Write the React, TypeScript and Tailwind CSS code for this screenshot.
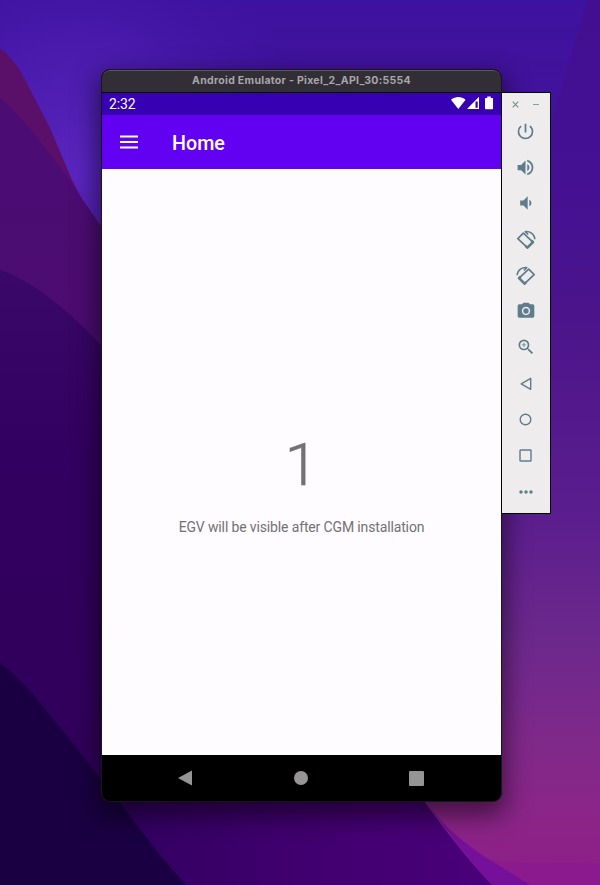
import type { ReactNode } from "react";
import {
  MdCameraAlt,
  MdMoreHoriz,
  MdPowerSettingsNew,
  MdVolumeDown,
  MdVolumeUp,
  MdZoomIn,
} from "react-icons/md";

function Wallpaper() {
  return (
    <svg
      className="absolute inset-0"
      width="600"
      height="885"
      viewBox="0 0 600 885"
      aria-hidden="true"
    >
      <defs>
        <linearGradient id="sky" x1="0" y1="0" x2="0" y2="1">
          <stop offset="0" stopColor="#3e12a0" />
          <stop offset="0.12" stopColor="#42129a" />
          <stop offset="0.35" stopColor="#4b148a" />
          <stop offset="0.57" stopColor="#5a1d8e" />
          <stop offset="0.72" stopColor="#6c288c" />
          <stop offset="0.84" stopColor="#80298a" />
          <stop offset="0.93" stopColor="#8c2488" />
          <stop offset="1" stopColor="#8c1e88" />
        </linearGradient>
        <radialGradient id="glow" gradientUnits="userSpaceOnUse" cx="75" cy="175" r="260">
          <stop offset="0" stopColor="#5b25bf" />
          <stop offset="0.5" stopColor="#4c1cb0" stopOpacity="0.8" />
          <stop offset="1" stopColor="#3e12a0" stopOpacity="0" />
        </radialGradient>
        <linearGradient id="corner" x1="0" y1="0" x2="0" y2="1">
          <stop offset="0" stopColor="#430f90" />
          <stop offset="1" stopColor="#430f90" stopOpacity="0" />
        </linearGradient>
        <linearGradient id="magenta" x1="0" y1="0" x2="0" y2="1">
          <stop offset="0" stopColor="#4b0c74" />
          <stop offset="1" stopColor="#4d0c68" />
        </linearGradient>
        <linearGradient id="violet" x1="0" y1="0" x2="0" y2="1">
          <stop offset="0" stopColor="#3a0868" />
          <stop offset="0.3" stopColor="#320060" />
          <stop offset="1" stopColor="#300058" />
        </linearGradient>
        <linearGradient id="floor" x1="0" y1="0" x2="1" y2="0">
          <stop offset="0" stopColor="#300060" />
          <stop offset="0.5" stopColor="#40006e" />
          <stop offset="1" stopColor="#4a007a" />
        </linearGradient>
      </defs>
      <rect width="600" height="885" fill="url(#sky)" />
      <rect width="400" height="450" fill="url(#glow)" />
      <path d="M587 0H600V330H500L558 100Z" fill="url(#corner)" />
      <path d="M0 48C8 54 14 62 20 70L50 128L72 180L82 199L101 226V400H0Z" fill="#5a1068" />
      <path d="M0 98C12 108 22 119 33 132C48 151 58 165 70 180L82 199L101 226L300 400V885H0Z" fill="url(#magenta)" />
      <path d="M0 270C34 281 70 312 100 344L300 540V885H0Z" fill="url(#violet)" />
      <path d="M100 740H378C410 779 448 839 492 885H100Z" fill="url(#floor)" />
      <path d="M488 860C525 866 560 861 600 864V885H520Z" fill="#8a1a8e" />
      <path d="M427 803C447 830 462 841 485 857L530 885H492C468 858 447 832 427 803Z" fill="#74109a" />
      <path d="M0 663C12 671 22 683 33 694L83 756C98 776 115 796 128 813C146 837 164 861 186 885H0Z" fill="#1a0042" />
    </svg>
  );
}

function RotateGlyph({ flipped = false }: { flipped?: boolean }) {
  return (
    <svg
      width="20"
      height="20"
      viewBox="0 0 20 20"
      fill="none"
      stroke="#5f7c8a"
      className={flipped ? "mt-px -scale-x-100" : "mt-px"}
    >
      <path d="M7.3 3.1 1.8 8.6 11.4 17.6 17 12.1Z" strokeWidth="1.7" strokeLinejoin="round" />
      <path d="M9.8 16.1 11.4 17.6 17 12.1 15.4 10.6" strokeWidth="2.6" strokeLinejoin="round" />
      <path d="M8.6 1.7C13.8.8 18.4 3.8 18.9 9.2M9.2 1.7l3 2.8" strokeWidth="1.5" />
    </svg>
  );
}

function Tool({ children }: { children: ReactNode }) {
  return <div className="flex h-9 w-full items-center justify-center">{children}</div>;
}

function Toolbar() {
  return (
    <aside className="mt-[23px] -ml-px flex h-[422px] w-[50px] flex-col border border-black bg-[#eeeced] pr-px text-[#5f7c8a]">
      <div className="flex h-5 shrink-0 items-center justify-between pt-[2px] pr-[10px] pl-[10px]">
        <svg width="7" height="7" viewBox="0 0 7 7" stroke="#7b8d96" strokeWidth="1.2">
          <path d="M.7.7 6.3 6.3M6.3.7.7 6.3" />
        </svg>
        <span className="h-px w-[6px] bg-[#8b9aa2]" />
      </div>
      <Tool><MdPowerSettingsNew size={21} /></Tool>
      <Tool><MdVolumeUp size={21} /></Tool>
      <Tool><MdVolumeDown size={20} /></Tool>
      <Tool><RotateGlyph /></Tool>
      <Tool><RotateGlyph flipped /></Tool>
      <Tool><MdCameraAlt size={20} /></Tool>
      <Tool><MdZoomIn size={20} /></Tool>
      <Tool>
        <svg className="mt-px" width="12" height="14" viewBox="0 0 12 14" fill="none" stroke="currentColor" strokeWidth="1.4" strokeLinejoin="round">
          <path d="M10.7 1.3V12.3L1.2 6.8Z" />
        </svg>
      </Tool>
      <Tool>
        <svg className="mt-px" width="13" height="13" viewBox="0 0 13 13" fill="none" stroke="currentColor" strokeWidth="1.4">
          <circle cx="6.5" cy="6.5" r="5.3" />
        </svg>
      </Tool>
      <Tool>
        <svg className="mt-px" width="13" height="13" viewBox="0 0 13 13" fill="none" stroke="currentColor" strokeWidth="1.4">
          <rect x="1" y="1" width="11" height="11" rx=".6" />
        </svg>
      </Tool>
      <Tool><MdMoreHoriz className="mt-px" size={20} /></Tool>
    </aside>
  );
}

function StatusBar() {
  return (
    <div className="flex h-[22px] shrink-0 items-center bg-[#3700b3] pr-[6px] pl-[7px] text-white">
      <span className="text-[14px] leading-[22px] tracking-[-0.1px]">2:32</span>
      <svg className="ml-auto" width="44" height="16" viewBox="0 0 44 16" fill="#fff">
        <path d="M0 3.8C4.3.2 10.3.2 14.6 3.8L7.3 12.9Z" />
        <path fillRule="evenodd" d="M28 .8V13H16Zm-1.3 4.6h-2.2v6.4h2.2Z" />
        <path d="M36.2.6h3.6V2h1.6q.6 0 .6.6v9.9q0 .8-.8.8h-6.4q-.8 0-.8-.8V2.6q0-.6.6-.6h1.6Z" />
      </svg>
    </div>
  );
}

export default function App() {
  return (
    <main className="relative h-[885px] w-[600px] overflow-hidden bg-[#30005c] font-[Roboto,sans-serif]">
      <Wallpaper />
      <div className="relative flex items-start pt-[69px] pl-[101px]">
        <section className="flex h-[733px] w-[401px] shrink-0 flex-col overflow-hidden rounded-[9px] border border-[#19151c] bg-black shadow-[0_10px_24px_4px_rgba(0,0,0,0.5)]">
          <header className="flex h-[22px] shrink-0 items-center justify-center rounded-t-[8px] border-t border-[#5d5960] bg-[#312e36] pb-[2px] font-[Inter,sans-serif] text-[10.5px] font-bold tracking-[0.3px] text-[#a8a6aa]">
            Android Emulator - Pixel_2_API_30:5554
          </header>
          <div className="h-px shrink-0 bg-black" />
          <StatusBar />
          <div className="flex h-[54px] shrink-0 items-center bg-[#6200f2] pl-[18px] text-white">
            <svg width="18" height="14" viewBox="0 0 18 14" stroke="#fff" strokeWidth="1.8">
              <path d="M0 1.5H18M0 7H18M0 12.5H18" />
            </svg>
            <h1 className="ml-[34px] pt-[3px] text-[19.7px] leading-6 font-medium">Home</h1>
          </div>
          <div className="flex flex-1 flex-col items-center bg-[#fefcff] text-[#737174]">
            <div className="mt-[261px] h-[70px] text-[60px] leading-[70px] font-light [-webkit-text-stroke:0.6px_#737174]">1</div>
            <p className="mt-[18px] text-[14px] leading-[18px] tracking-[-0.14px]">EGV will be visible after CGM installation</p>
          </div>
          <nav className="flex h-[46px] shrink-0 items-center justify-between pr-[77px] pl-[76px]">
            <svg width="14" height="16" viewBox="0 0 14 16" fill="#979498">
              <path d="M14 .5V15.5L0 8Z" />
            </svg>
            <span className="size-[14px] rounded-full bg-[#979498]" />
            <span className="size-[15px] rounded-[1px] bg-[#979498]" />
          </nav>
        </section>
        <Toolbar />
      </div>
    </main>
  );
}
